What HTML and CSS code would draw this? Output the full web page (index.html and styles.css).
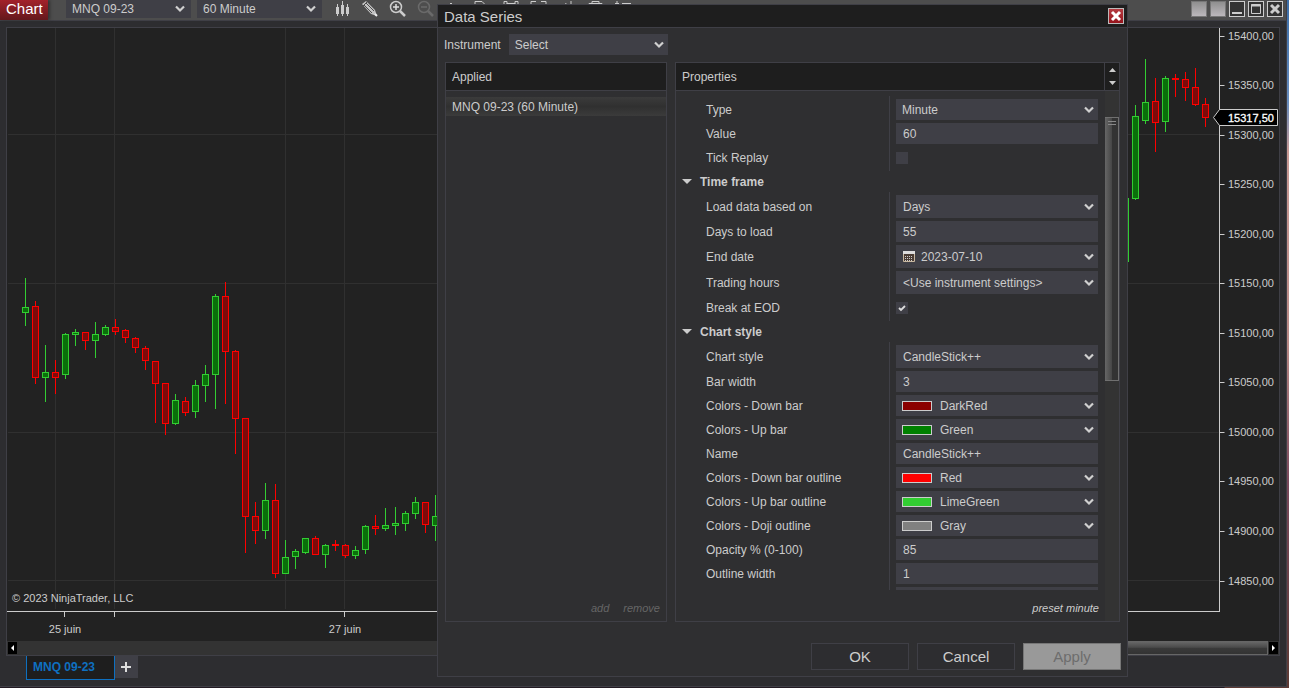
FILE: index.html
```html
<!DOCTYPE html>
<html lang="en">
<head>
  <meta charset="UTF-8">
  <meta name="viewport" content="width=device-width, initial-scale=1.0">
  <title>Chart - Data Series</title>
  <link rel="stylesheet" href="styles.css">
</head>
<body>
  <main class="window">
    <header class="topbar">
      <h1 class="app-title">Chart</h1>
      <select class="toolbar-select" aria-label="Chart instrument"><option>MNQ 09-23</option></select>
      <select class="toolbar-select" aria-label="Interval"><option>60 Minute</option></select>
      <div class="tools">
        <button class="tool" aria-label="Bar style">
          <svg width="16" height="18" viewBox="0 0 16 18"><path d="M2.500 4v12M7.500 1v15M12.500 4v12" stroke="#ccc"/><path d="M1 7h3v7H1zM6 5h3v9H6zM11 7h3v7h-3z" fill="#ccc"/></svg>
        </button>
        <button class="tool" aria-label="Drawing tools">
          <svg width="18" height="18" viewBox="0 0 18 18"><path d="M1 4l4-3 9 9 2 6-6-2z" fill="#c4c4c4"/><path d="M3 5l8 8M5 3l8 8M2 6l4-4" stroke="#4d4d4d"/><path d="M14 14l2 2" stroke="#eee" stroke-width="2"/></svg>
        </button>
        <button class="tool" aria-label="Zoom in">
          <svg width="18" height="18" viewBox="0 0 18 18"><circle cx="7" cy="7" r="5.500" fill="none" stroke="#ccc" stroke-width="1.500"/><path d="M4 7h6M7 4v6" stroke="#ddd" stroke-width="1.500"/><path d="M11 11l5 5" stroke="#ccc" stroke-width="2.500"/></svg>
        </button>
        <button class="tool" aria-label="Zoom out" disabled>
          <svg width="18" height="18" viewBox="0 0 18 18"><circle cx="7" cy="7" r="5.500" fill="none" stroke="#6a6a6a" stroke-width="1.500"/><path d="M4 7h6" stroke="#6a6a6a" stroke-width="1.500"/><path d="M11 11l5 5" stroke="#6a6a6a" stroke-width="2.500"/></svg>
        </button>
        <svg class="more-tools" width="190" height="18" viewBox="0 0 190 18" fill="none" stroke="#ccc">
          <path d="M6 4v10M4 5l2-2 2 2"/>
          <path d="M30 14V1.500h7l4 4V14z"/>
          <path d="M59 5V1.500h3v2h8v-2h3V5M62 3v9M70 3v9"/>
          <path d="M86 5V1.500h5M96 1.500h5V5"/>
          <path d="M118 12l3-9M126 1v3l4 6"/>
          <path d="M144 12V3.500h3v-2h7v2h3V12M147 3.500h7"/>
          <path d="M172 1v12M170 3.500h4M177 3.500h9"/>
        </svg>
      </div>
      <div class="window-buttons">
        <button class="link-box" aria-label="Instrument link"></button>
        <button class="link-box" aria-label="Interval link"></button>
        <button class="win-btn" aria-label="Minimize"><svg width="14" height="14"><path d="M2 11h10" stroke="#ccc" stroke-width="2"/></svg></button>
        <button class="win-btn" aria-label="Maximize"><svg width="14" height="14"><path d="M2.500 2.500h9v9h-9z" fill="none" stroke="#ccc"/><path d="M2 3.500h10" stroke="#ccc" stroke-width="2"/></svg></button>
        <button class="win-btn" aria-label="Close"><svg width="14" height="14"><path d="M3 3l8 8M11 3l-8 8" stroke="#ccc" stroke-width="3"/></svg></button>
      </div>
    </header>

    <section class="chart-frame">
      <svg id="chart" class="chart" role="img" aria-label="MNQ 09-23 60 minute chart"></svg>
      <div class="h-scroll">
        <button class="h-arrow" aria-label="Scroll left"><svg width="9" height="12"><path d="M6 3v6L3 6z" fill="#fff"/></svg></button>
        <div class="h-track"><div class="h-thumb"></div></div>
        <button class="h-arrow" aria-label="Scroll right"><svg width="9" height="12"><path d="M3 3v6l3-3z" fill="#fff"/></svg></button>
      </div>
    </section>

    <nav class="tabs">
      <button class="tab">MNQ 09-23</button>
      <button class="tab-add" aria-label="Add tab"><svg width="10" height="10"><path d="M0 5h10M5 0v10" stroke="#ddd" stroke-width="2"/></svg></button>
    </nav>
  </main>

  <section class="dialog" role="dialog" aria-labelledby="dialogTitle">
    <header class="dialog-head">
      <h2 id="dialogTitle">Data Series</h2>
      <button class="dialog-close" aria-label="Close dialog"><svg width="14" height="14"><path d="M3 3l8 8M11 3l-8 8" stroke="#fff" stroke-width="3"/></svg></button>
    </header>

    <form class="dialog-body">
      <div class="instrument">
        <label for="instrument">Instrument</label>
        <select id="instrument" class="field"><option>Select</option></select>
      </div>

      <div class="panels">
        <div class="panel applied">
          <h3 class="panel-head">Applied</h3>
          <ul class="series-list">
            <li>MNQ 09-23 (60 Minute)</li>
          </ul>
          <div class="panel-foot">
            <button type="button" class="text-btn" disabled>add</button>
            <button type="button" class="text-btn" disabled>remove</button>
          </div>
        </div>

        <div class="panel properties">
          <div class="prop-head">
            <h3 class="panel-head">Properties</h3>
            <div class="arrows">
              <button type="button" aria-label="Collapse"><svg width="7" height="4"><path d="M0 4l3.500-4L7 4z" fill="#ccc"/></svg></button>
              <button type="button" aria-label="Expand"><svg width="7" height="4"><path d="M0 0h7L3.500 4z" fill="#ccc"/></svg></button>
            </div>
          </div>
          <div class="prop-main">
            <div class="prop-col">
              <div class="prop-scroll">
                <div class="row">
                  <label for="type">Type</label>
                  <select id="type" class="field"><option>Minute</option></select>
                </div>
                <div class="row">
                  <label for="value">Value</label>
                  <input id="value" class="field" type="text" value="60">
                </div>
                <div class="row check">
                  <label for="tickReplay">Tick Replay</label>
                  <input id="tickReplay" type="checkbox">
                </div>

                <h4 class="group">Time frame</h4>
                <div class="row tall">
                  <label for="loadBased">Load data based on</label>
                  <select id="loadBased" class="field"><option>Days</option></select>
                </div>
                <div class="row">
                  <label for="days">Days to load</label>
                  <input id="days" class="field" type="text" value="55">
                </div>
                <div class="row tall">
                  <label for="endDate">End date</label>
                  <div class="field combo">
                    <svg width="12" height="11"><path d="M.5.5h11v10H.5z" fill="#4a3c34" stroke="#c8b8a0"/><path d="M0 1.500h12" stroke="#ddd" stroke-width="3"/><path d="M2 5.500h8M2 7.500h8M2 9.500h8" stroke="#ccc" stroke-dasharray="1 1"/></svg>
                    <select id="endDate"><option>2023-07-10</option></select>
                  </div>
                </div>
                <div class="row tall">
                  <label for="hours">Trading hours</label>
                  <select id="hours" class="field"><option>&lt;Use instrument settings&gt;</option></select>
                </div>
                <div class="row check">
                  <label for="breakEod">Break at EOD</label>
                  <input id="breakEod" type="checkbox" checked>
                </div>

                <h4 class="group">Chart style</h4>
                <div class="row tall">
                  <label for="style">Chart style</label>
                  <select id="style" class="field"><option>CandleStick++</option></select>
                </div>
                <div class="row">
                  <label for="barWidth">Bar width</label>
                  <input id="barWidth" class="field" type="text" value="3">
                </div>
                <div class="row">
                  <label for="downBar">Colors - Down bar</label>
                  <div class="field combo"><span class="swatch darkred"></span><select id="downBar"><option>DarkRed</option></select></div>
                </div>
                <div class="row">
                  <label for="upBar">Colors - Up bar</label>
                  <div class="field combo"><span class="swatch green"></span><select id="upBar"><option>Green</option></select></div>
                </div>
                <div class="row">
                  <label for="styleName">Name</label>
                  <input id="styleName" class="field" type="text" value="CandleStick++">
                </div>
                <div class="row">
                  <label for="downOutline">Colors - Down bar outline</label>
                  <div class="field combo"><span class="swatch red"></span><select id="downOutline"><option>Red</option></select></div>
                </div>
                <div class="row">
                  <label for="upOutline">Colors - Up bar outline</label>
                  <div class="field combo"><span class="swatch limegreen"></span><select id="upOutline"><option>LimeGreen</option></select></div>
                </div>
                <div class="row">
                  <label for="dojiOutline">Colors - Doji outline</label>
                  <div class="field combo"><span class="swatch gray"></span><select id="dojiOutline"><option>Gray</option></select></div>
                </div>
                <div class="row">
                  <label for="opacity">Opacity % (0-100)</label>
                  <input id="opacity" class="field" type="text" value="85">
                </div>
                <div class="row">
                  <label for="outlineWidth">Outline width</label>
                  <input id="outlineWidth" class="field" type="text" value="1">
                </div>
                <div class="row">
                  <span class="row-label"></span>
                  <span class="field"></span>
                </div>
              </div>
              <div class="panel-foot">
                <button type="button" class="text-btn">preset minute</button>
              </div>
            </div>
            <div class="v-track"><div class="v-thumb"></div></div>
          </div>
        </div>
      </div>

      <div class="actions">
        <button type="button">OK</button>
        <button type="button">Cancel</button>
        <button type="button" disabled>Apply</button>
      </div>
    </form>
  </section>

  <script src="chart.js"></script>
</body>
</html>
```
FILE: styles.css
```css
* {
  box-sizing: border-box;
}

body {
  margin: 0;
  height: 100vh;
  overflow: hidden;
  position: relative;
  padding: 0 2px 1px 0;
  font-family: "Liberation Sans", Arial, sans-serif;
  font-size: 12px;
  color: #ccc;
  background:
    linear-gradient(#221a22, #221a22) left bottom / 95% 1px no-repeat,
    linear-gradient(#3b6ea8, #6a8fc0 15%, #c99a94 22%, #b98a86 50%, #7a4a5c 70%, #5c3a34);
}

h1, h2, h3, h4, ul {
  margin: 0;
  padding: 0;
  font-weight: normal;
  font-size: 12px;
}

button, input, select {
  font: inherit;
  color: inherit;
  margin: 0;
  padding: 0;
  border: 0;
  border-radius: 0;
  background: none;
}

select {
  appearance: none;
  background: url("data:image/svg+xml,%3Csvg xmlns='http://www.w3.org/2000/svg' width='10' height='8'%3E%3Cpath d='M1 1.500l4 4 4-4' fill='none' stroke='%23d0d0d0' stroke-width='2.200'/%3E%3C/svg%3E") no-repeat right 4px center;
}

svg {
  display: block;
}

/* main window */
.window {
  height: 100%;
  display: flex;
  flex-direction: column;
  background: #2d2d30;
  border-right: 1px solid #3f3f46;
  border-bottom: 1px solid #3f3f46;
}

.topbar {
  height: 21px;
  display: flex;
  align-items: flex-start;
  background: #4d4d4d;
  border-bottom: 1px solid #3f3f46;
}

.app-title {
  width: 48px;
  height: 20px;
  margin-right: 18px;
  padding-left: 6px;
  font-size: 15px;
  line-height: 18px;
  color: #fff;
  background: linear-gradient(#a3222a, #64181c);
  box-shadow: 2px 0 3px #333;
}

.toolbar-select {
  width: 125px;
  height: 18px;
  margin-right: 6px;
  padding-left: 6px;
  background-color: #3f3f46;
  background-position: right 6px center;
}

.tools {
  display: flex;
  gap: 10px;
  margin-left: 7px;
}

.window-buttons {
  display: flex;
  gap: 3px;
  margin: 1px 3px 0 auto;
}

.window-buttons button {
  width: 16px;
  height: 16px;
}

.link-box {
  border: 1px solid #777;
  background: linear-gradient(#8f8f8f, #bcb8bc);
}

.win-btn {
  border: 1px solid #ccc;
  background: #333;
}

/* chart */
.chart-frame {
  flex: 1;
  min-height: 0;
  margin: 6px 6px 0;
  display: flex;
  flex-direction: column;
  border: 1px solid #3f3f46;
  background: #222;
}

.chart {
  flex: 1;
  min-height: 0;
  width: 100%;
  font-size: 11px;
  fill: #ccc;
}

.h-scroll {
  height: 14px;
  display: flex;
  align-items: center;
  gap: 1px;
  padding: 0 1px;
  background: #333;
}

.h-arrow {
  background: #000;
}

.h-track {
  flex: 1;
  height: 14px;
}

.h-thumb {
  width: 60%;
  height: 14px;
  margin-left: auto;
  border: 1px solid #666;
  background: linear-gradient(#666, #4a4a4a 45%, #3a3a3a 50%, #333);
}

/* tabs */
.tabs {
  display: flex;
  align-items: flex-start;
  height: 30px;
  padding-left: 26px;
}

.tab {
  height: 24px;
  width: 89px;
  padding: 0 0 2px 6px;
  font-weight: bold;
  color: #0e70c0;
  background: #1e1e1e;
  border: 1px solid #0e70c0;
  border-top: 0;
  text-align: left;
}

.tab-add {
  width: 23px;
  height: 22px;
  padding: 0 6px;
  background: #3f3f46;
}

/* dialog */
.dialog {
  position: absolute;
  left: 437px;
  top: 4px;
  width: 691px;
  border: 1px solid #3f3f46;
  background: #2f2f31;
}

.dialog-head {
  height: 23px;
  display: flex;
  justify-content: space-between;
  align-items: center;
  padding: 0 3px 0 6px;
  background: #1e1e1e;
  border-bottom: 1px solid #3f3f46;
}

.dialog-head h2 {
  font-size: 15px;
}

.dialog-close {
  width: 16px;
  height: 16px;
  border: 1px solid #bbb;
  background: linear-gradient(#b43a40, #96141c);
}

.dialog-body {
  padding: 6px;
}

.instrument {
  display: flex;
  align-items: center;
  gap: 8px;
}

.instrument .field {
  width: 159px;
}

.field {
  height: 21px;
  padding-left: 6px;
  background-color: #3f3f46;
}

.panels {
  display: flex;
  gap: 8px;
  height: 560px;
  margin: 7px 1px 21px;
}

.panel {
  display: flex;
  flex-direction: column;
  border: 1px solid #3f3f46;
}

.applied {
  width: 222px;
}

.properties {
  flex: 1;
}

.panel-head {
  flex: none;
  height: 28px;
  padding-left: 6px;
  line-height: 28px;
  background: #1e1e1e;
  border-bottom: 1px solid #3f3f46;
}

.series-list {
  flex: 1;
  padding-top: 6px;
  list-style: none;
}

.series-list li {
  height: 19px;
  padding-left: 6px;
  line-height: 20px;
  background: linear-gradient(#3b3b3b, #303030 50%, #3b3b3b);
}

.panel-foot {
  height: 31px;
  display: flex;
  justify-content: flex-end;
  gap: 14px;
  padding-right: 6px;
}

.text-btn {
  height: 36px;
  font-size: 11px;
  font-style: italic;
}

.text-btn:disabled {
  color: #666;
}

/* property grid */
.prop-head {
  display: flex;
}

.prop-head .panel-head {
  flex: 1;
}

.arrows {
  width: 15px;
  height: 28px;
  display: flex;
  flex-direction: column;
  justify-content: space-around;
  align-items: center;
  background: #1e1e1e;
  border-left: 1px solid #3f3f46;
  border-bottom: 1px solid #3f3f46;
}

.prop-main {
  flex: 1;
  min-height: 0;
  display: flex;
}

.prop-col {
  flex: 1;
  display: flex;
  flex-direction: column;
}

.prop-scroll {
  flex: 1;
  min-height: 0;
  overflow: hidden;
  padding: 5px 7px 0 0;
}

.row {
  display: flex;
  align-items: flex-end;
  height: 24px;
}

.row.tall {
  height: 26px;
}

.row.tall .field {
  height: 23px;
}

.row label,
.row-label {
  display: flex;
  align-items: center;
  align-self: stretch;
  width: 214px;
  margin-right: 6px;
  padding: 3px 0 0 30px;
  border-right: 1px solid #3f3f46;
}

.row .field {
  flex: 1;
  min-width: 0;
}

input.field,
.tall .field {
  padding-left: 7px;
}

.row.check {
  height: 27px;
  align-items: center;
}

.row.check label {
  padding-top: 0;
}

input[type="checkbox"] {
  appearance: none;
  width: 12px;
  height: 12px;
  background: #3f3f46;
}

input[type="checkbox"]:checked {
  background: #3f3f46 url("data:image/svg+xml,%3Csvg xmlns='http://www.w3.org/2000/svg' width='12' height='12'%3E%3Cpath d='M3 6l2 2 4-4' fill='none' stroke='%23ddd' stroke-width='1.800'/%3E%3C/svg%3E");
}

.group {
  display: flex;
  align-items: center;
  gap: 8px;
  height: 21px;
  padding-left: 6px;
  font-weight: bold;
}

.group::before {
  content: "";
  border: 5px solid transparent;
  border-top-color: #ccc;
  border-bottom: 0;
}

.combo {
  display: flex;
  align-items: center;
  gap: 6px;
}

.combo select {
  flex: 1;
  align-self: stretch;
}

.swatch {
  width: 30px;
  height: 10px;
  margin-right: 2px;
  border: 1px solid #ccc;
}

.darkred { background: darkred; }
.green { background: green; }
.red { background: red; }
.limegreen { background: limegreen; }
.gray { background: gray; }

.v-track {
  width: 14px;
  padding-top: 26px;
  background: #333;
}

.v-thumb {
  height: 264px;
  border: 1px solid #707070;
  border-left: 0;
  background:
    linear-gradient(#888, #888) 3px 3px / 8px 1px no-repeat,
    linear-gradient(#888, #888) 3px 6px / 8px 1px no-repeat,
    linear-gradient(to right, #666, #484848 50%, #333 50%);
}

/* dialog buttons */
.actions {
  display: flex;
  justify-content: flex-end;
  gap: 8px;
}

.actions button {
  width: 98px;
  height: 27px;
  font-size: 15px;
  border: 1px solid #3f3f46;
  background: #2d2d30;
}

.actions button:disabled {
  color: #6d6d6d;
  background: #999;
  border-color: #777;
}
```
FILE: chart.js
```js
const chart = document.getElementById('chart');

// [direction, high, body top, body bottom, low]
const firstBars = [
  ['up', 250, 279, 285, 298], ['down', 273, 278, 350, 356], ['up', 317, 344, 350, 374],
  ['down', 332, 344, 350, 366], ['up', 305, 306, 347, 351], ['up', 301, 304, 307, 318],
  ['down', 304, 304, 313, 322], ['up', 294, 306, 313, 330], ['up', 297, 299, 307, 308],
  ['down', 291, 299, 304, 307], ['down', 301, 302, 310, 315], ['down', 309, 310, 320, 325],
  ['down', 318, 320, 333, 342], ['down', 333, 333, 356, 395], ['down', 355, 355, 396, 407],
  ['up', 366, 372, 396, 397], ['down', 369, 373, 385, 388], ['up', 352, 357, 384, 390],
  ['up', 337, 346, 358, 374], ['up', 266, 268, 347, 381], ['down', 254, 268, 324, 376],
  ['down', 322, 323, 391, 426], ['down', 390, 390, 489, 525], ['down', 474, 488, 503, 516],
  ['up', 455, 472, 503, 511], ['down', 456, 472, 546, 550], ['up', 512, 529, 546, 546],
  ['up', 521, 523, 529, 541], ['up', 510, 510, 525, 526], ['down', 508, 510, 527, 527],
  ['up', 516, 517, 527, 540], ['down', 512, 516, 518, 523], ['down', 516, 517, 528, 530],
  ['up', 518, 522, 528, 531], ['up', 497, 498, 522, 526], ['down', 487, 498, 501, 507],
  ['up', 480, 497, 501, 503], ['up', 479, 495, 498, 507], ['up', 483, 485, 496, 503],
  ['up', 469, 474, 486, 491], ['down', 474, 474, 497, 505], ['up', 467, 488, 498, 513]
];

const lastBars = [
  ['up', 170, 170, 234, 234],
  ['up', 77, 88, 171, 172], ['up', 31, 74, 93, 96],
  ['down', 50, 73, 95, 124], ['up', 48, 50, 94, 104], ['down', 46, 50, 52, 69],
  ['down', 44, 51, 60, 73], ['down', 40, 59, 77, 78], ['down', 70, 76, 90, 99]
];

const barStep = 10;
const axisWidth = 60;
const axisBottom = 583;
const topPrice = 15400;
const pixelsPerPoint = 0.991;

function line(x1, y1, x2, y2, color) {
  return `<path d="M${x1} ${y1}L${x2} ${y2}" stroke="${color}"/>`;
}

function bar(x, [dir, high, top, bottom, low]) {
  const stroke = dir === 'up' ? 'limegreen' : 'red';
  const fill = dir === 'up' ? '#0a700a' : '#7d0a0a';
  return line(x, high, x, low, stroke) +
    `<rect x="${x - 3}" y="${top + 0.5}" width="6" height="${bottom - top - 1}" fill="${fill}" stroke="${stroke}"/>`;
}

function drawChart() {
  const width = chart.clientWidth;
  const axisX = width - axisWidth + 0.5;
  let out = '';

  // grid
  [48.5, 107.5, 278.5, 337.5].forEach(x => out += line(x, 0, x, axisBottom - 2, '#303030'));
  [106.5, 255.5, 404.5, 552.5].forEach(y => out += line(1, y, axisX - 1, y, '#303030'));

  firstBars.forEach((b, i) => out += bar(18.5 + i * barStep, b));
  lastBars.forEach((b, i) => out += bar(axisX - 14 - (lastBars.length - 1 - i) * barStep, b));

  // axes
  out += line(0, axisBottom + 0.5, axisX + 0.5, axisBottom + 0.5, '#ccc');
  out += line(axisX, 0, axisX, axisBottom, '#ccc');
  [57.5, 107.5, 337.5].forEach(x => out += line(x, axisBottom, x, axisBottom + 6, '#ccc'));
  out += `<text x="58" y="605" text-anchor="middle">25 juin</text>`;
  out += `<text x="338" y="605" text-anchor="middle">27 juin</text>`;
  out += `<text x="5" y="574">© 2023 NinjaTrader, LLC</text>`;

  for (let price = topPrice; price >= 14850; price -= 50) {
    const y = Math.round(7.5 + (topPrice - price) * pixelsPerPoint) + 0.5;
    out += line(axisX, y, axisX + 5, y, '#ccc');
    out += `<text x="${axisX + 8.5}" y="${y + 3.5}">${price},00</text>`;
  }

  // last price marker
  out += `<path d="M${axisX - 6} 89.5l6-8h58v16h-58z" fill="#000" stroke="#ccc"/>`;
  out += `<text x="${axisX + 8.5}" y="94" fill="#fff" stroke="#fff" stroke-width="0.3">15317,50</text>`;

  chart.innerHTML = out;
}

window.addEventListener('resize', drawChart);
drawChart();
```
